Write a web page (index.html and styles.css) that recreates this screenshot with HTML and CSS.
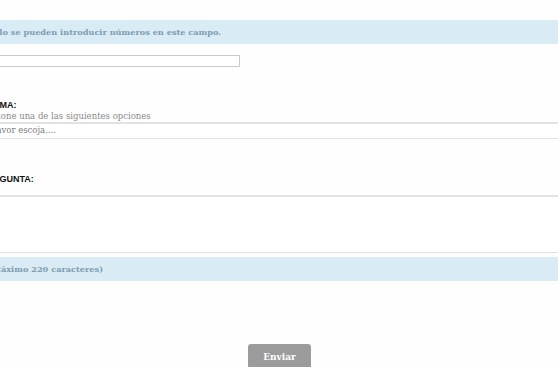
FILE: index.html
```html
<!DOCTYPE html>
<html lang="es">
<head>
    <meta charset="UTF-8">
    <meta name="viewport" content="width=device-width, initial-scale=1.0">
    <title>Consulta</title>
    <link rel="stylesheet" href="styles.css">
</head>
<body>
    <form class="consulta">
        <p class="aviso aviso-numeros">Sólo se pueden introducir números en este campo.</p>
        <input type="text" class="campo-numero">

        <label class="etiqueta etiqueta-tema">TEMA:</label>
        <p class="ayuda">Seleccione una de las siguientes opciones</p>
        <div class="selector">Por favor escoja....</div>

        <label class="etiqueta etiqueta-pregunta">PREGUNTA:</label>
        <textarea class="campo-pregunta"></textarea>
        <p class="aviso aviso-maximo">(Máximo 220 caracteres)</p>

        <div class="acciones">
            <button type="button" class="enviar">Enviar</button>
        </div>
    </form>
</body>
</html>
```

FILE: styles.css
```css
body {
    margin: 0;
    background-color: #fefefe;
    overflow: hidden;
    font-family: "DejaVu Serif", serif;
}
.consulta {
    display: flex;
    flex-direction: column;
    margin-left: -12px;
    padding-top: 20px;
}
.aviso {
    margin: 0;
    height: 24px;
    line-height: 24px;
    background-color: #d9ebf4;
    color: #7d9db1;
    font-size: 8.2px;
    font-weight: bold;
}
.campo-numero {
    width: 252px;
    height: 12px;
    box-sizing: border-box;
    margin-top: 11px;
    border: 1px solid #c9c9c9;
    padding: 0;
    background: #fff;
}
.etiqueta {
    display: block;
    font-family: "Liberation Sans", sans-serif;
    font-size: 9px;
    font-weight: bold;
    color: #111;
    line-height: 10px;
}
.etiqueta-tema {
    margin-top: 33px;
}
.ayuda {
    margin: 1px 0 0 -18px;
    font-size: 8.5px;
    line-height: 11px;
    color: #8a8a8a;
}
.selector {
    width: calc(100% + 30px);
    height: 17px;
    box-sizing: border-box;
    border: 1px solid #e2e2e2;
    border-top-width: 2px;
    background: #fff;
    padding-left: 2px;
    text-indent: -15px;
    font-size: 8.5px;
    line-height: 13px;
    color: #7a7a7a;
}
.etiqueta-pregunta {
    margin-top: 35px;
    text-indent: -7px;
}
.campo-pregunta {
    width: calc(100% + 30px);
    margin: 11px 0 0;
    height: 58px;
    box-sizing: border-box;
    border: 1px solid #e2e2e2;
    border-top-width: 2px;
    resize: none;
    background: #fff;
}
.aviso-maximo {
    margin-top: 4px;
}
.acciones {
    display: flex;
    justify-content: center;
    margin-top: 63px;
    padding-left: 12px;
}
.enviar {
    width: 63px;
    height: 25px;
    margin-left: 1px;
    border: none;
    border-radius: 3px;
    background-color: #9b9b9b;
    color: #fff;
    font-family: "DejaVu Serif", serif;
    font-size: 9px;
    font-weight: bold;
}
```
